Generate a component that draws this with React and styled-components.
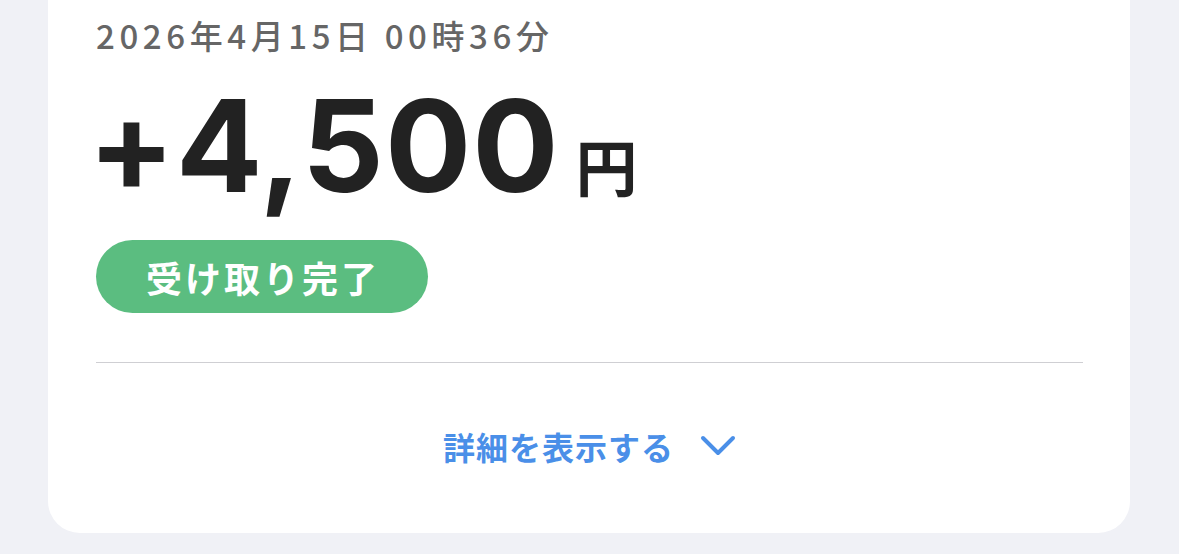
import React from 'react'
import styled, { createGlobalStyle } from 'styled-components'

const Global = createGlobalStyle`
  html, body {
    margin: 0;
    padding: 0;
    background: #f0f1f6;
  }
  body {
    font-family: "Inter", "Noto Sans CJK JP", sans-serif;
  }
`

const Page = styled.div`
  width: 1179px;
  height: 554px;
  padding: 0 49px 0 48px;
  box-sizing: border-box;
  overflow: hidden;
`

const Card = styled.div`
  background: #fff;
  border-radius: 0 0 32px 32px;
  padding: 15px 47px 64px 48px;
  display: flex;
  flex-direction: column;
`

const DateLine = styled.div`
  font-family: "Noto Sans CJK JP", sans-serif;
  font-size: 33px;
  line-height: 40px;
  font-weight: 500;
  letter-spacing: 4.6px;
  color: #666;
`

const AmountRow = styled.div`
  display: flex;
  align-items: baseline;
  gap: 16px;
  margin-top: 26px;
  color: #222;
`

const Amount = styled.span`
  font-family: "Inter", sans-serif;
  font-size: 128px;
  line-height: 130px;
  font-weight: 700;
  letter-spacing: 1px;
  margin-left: -8px;
`

const Unit = styled.span`
  font-family: "Noto Sans CJK JP", sans-serif;
  font-size: 62px;
  font-weight: 700;
`

const Badge = styled.div`
  align-self: flex-start;
  margin-top: 29px;
  height: 73px;
  padding: 0 48px 0 50px;
  border-radius: 37px;
  background: ${p => p.color};
  color: #fff;
  font-family: "Noto Sans CJK JP", sans-serif;
  font-size: 36px;
  font-weight: 700;
  letter-spacing: 3px;
  display: flex;
  align-items: center;
`

const Divider = styled.hr`
  border: none;
  border-top: 1px solid #cfcfd3;
  margin: 49px 0 0;
`

const ToggleButton = styled.button`
  align-self: center;
  margin-top: 60px;
  background: none;
  border: none;
  padding: 0;
  display: flex;
  align-items: center;
  gap: 26px;
  color: #4a8fe8;
  font-family: "Noto Sans CJK JP", sans-serif;
  font-size: 32px;
  font-weight: 700;
  letter-spacing: 1px;
  cursor: pointer;
`

const Chevron = () => (
  <svg width="36" height="24" viewBox="0 0 36 24" fill="none">
    <path d="M3 4 L18 19 L33 4" stroke="currentColor" strokeWidth="4" strokeLinecap="round" strokeLinejoin="round" />
  </svg>
)

const App = () => {
  return (
    <Page>
      <Global />
      <Card>
        <DateLine>2026年4月15日 00時36分</DateLine>
        <AmountRow>
          <Amount>+4,500</Amount>
          <Unit>円</Unit>
        </AmountRow>
        <Badge color="#5bbd80">受け取り完了</Badge>
        <Divider />
        <ToggleButton>
          詳細を表示する
          <Chevron />
        </ToggleButton>
      </Card>
    </Page>
  )
}

export default App
